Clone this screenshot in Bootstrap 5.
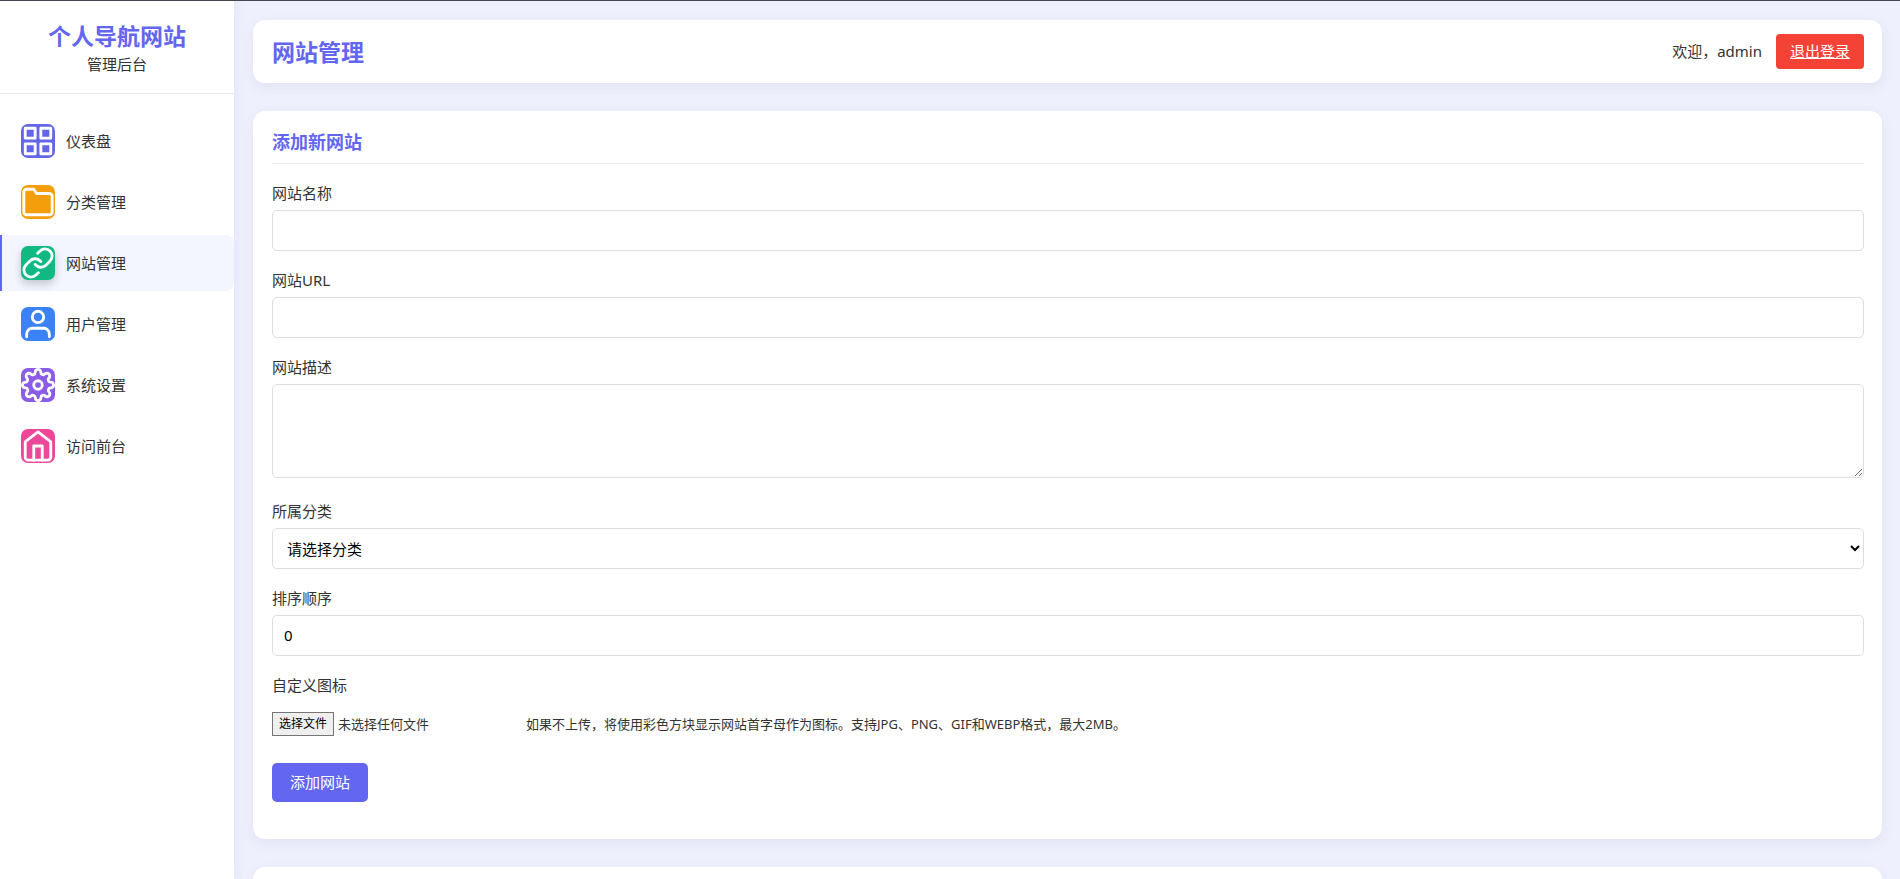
<!DOCTYPE html>
<html lang="zh-CN">
<head>
<meta charset="utf-8">
<meta name="viewport" content="width=device-width, initial-scale=1">
<title>网站管理</title>
<link href="https://cdn.jsdelivr.net/npm/bootstrap@5.3.0/dist/css/bootstrap.min.css" rel="stylesheet">
<style>
  :root { --brand: #6366f1; --ink: #333; --line: #ddd; }
  body {
    font: 15px/23px "Noto Sans", "Noto Sans CJK SC", sans-serif;
    color: var(--ink);
    background: #eef0fd;
    border-top: 1px solid #45454f;
  }
  a { color: inherit; }
  .side { width: 234px; background: #fff; box-shadow: 2px 0 10px rgba(99, 102, 241, .08); }
  .side-head { padding: 18px 19px 17px; border-bottom: 1px solid #eaeaea; }
  .brand-title { font-size: 23px; line-height: 34px; font-weight: 700; color: var(--brand); margin: 0; }
  .side-menu { padding-top: 19px; gap: 5px; }
  .side-link {
    display: flex; align-items: center; gap: 11px; height: 56px;
    padding-left: 19px; border-left: 2px solid transparent;
    border-radius: 0 8px 8px 0; text-decoration: none;
  }
  .side-link.active { background: #f3f6fe; border-left-color: var(--brand); }
  .tile { width: 34px; height: 34px; border-radius: 7px; flex: none; }
  .side-link.active .tile { box-shadow: 0 4px 8px rgba(0, 0, 0, .2); }
  .tile svg { display: block; width: 34px; height: 34px; fill: none; stroke: #fff; stroke-width: 2; stroke-linecap: round; stroke-linejoin: round; }
  .t-indigo { background: #6366e6; }
  .t-amber { background: #f59e0b; }
  .t-green { background: #10b981; }
  .t-blue { background: #3b82f6; }
  .t-violet { background: #8b5ce6; }
  .t-pink { background: #ec4899; }
  .content { padding: 19px 18px 0 19px; gap: 28px; }
  .panel { background: #fff; border-radius: 12px; box-shadow: 0 4px 14px rgba(60, 50, 120, .07); }
  .topbar { padding: 14px 18px 14px 19px; }
  .account { gap: 14px; }
  .logout { background: #f44336; border-radius: 4px; padding: 6px 14px; color: #fff; }
  .logout:hover { background: #dc3328; color: #fff; }
  .form-panel { padding: 18px 18px 19px 19px; }
  .panel-title { font-size: 18px; line-height: 27px; font-weight: 700; color: var(--brand); padding-bottom: 7px; border-bottom: 1px solid #eaeaea; margin: 0 0 18px; }
  .field { margin-bottom: 18px; }
  .field label.caption { display: block; margin-bottom: 5px; }
  .field .form-control { font-size: 15px; line-height: 19px; padding: 10px 11px; border-color: var(--line); border-radius: 5px; color: #000; }
  .field select.form-control { appearance: auto; height: 41px; padding: 8px 10px; line-height: 23px; }
  .field textarea.form-control { height: 94px; margin-bottom: 22px; }
  .upload-row { height: 43px; font-size: 13px; line-height: 18px; }
  .picker { width: 254px; }
  .picker input { cursor: pointer; }
  .picker-btn { background: #efefef; border: 1px solid #767676; color: #000; font-size: 12px; padding: 2px 6px; }
  .submit { background: var(--brand); color: #fff; font-size: 15px; line-height: 23px; padding: 8px 18px; border: 0; border-radius: 5px; margin-bottom: 18px; }
  .submit:hover { background: #4f46e5; color: #fff; }
  .next-panel { border-radius: 12px 12px 0 0; }
</style>
</head>
<body class="d-flex min-vh-100">
<aside class="side flex-shrink-0">
  <div class="side-head text-center">
    <h2 class="brand-title">个人导航网站</h2>
    <div>管理后台</div>
  </div>
  <nav class="side-menu d-flex flex-column">
    <a class="side-link" href="#"><span class="tile t-indigo"><svg viewBox="0 0 24 24"><rect x="3" y="3" width="7" height="7"/><rect x="14" y="3" width="7" height="7"/><rect x="14" y="14" width="7" height="7"/><rect x="3" y="14" width="7" height="7"/></svg></span>仪表盘</a>
    <a class="side-link" href="#"><span class="tile t-amber"><svg viewBox="0 0 24 24"><path d="M22 19a2 2 0 0 1-2 2H4a2 2 0 0 1-2-2V5a2 2 0 0 1 2-2h5l2 3h9a2 2 0 0 1 2 2z"/></svg></span>分类管理</a>
    <a class="side-link active" href="#" aria-current="page"><span class="tile t-green"><svg viewBox="0 0 24 24"><path d="M10 13a5 5 0 0 0 7.540.54l3-3a5 5 0 0 0-7.07-7.07l-1.72 1.71"/><path d="M14 11a5 5 0 0 0-7.540-.54l-3 3a5 5 0 0 0 7.07 7.07l1.71-1.71"/></svg></span>网站管理</a>
    <a class="side-link" href="#"><span class="tile t-blue"><svg viewBox="0 0 24 24"><path d="M20 21v-2a4 4 0 0 0-4-4H8a4 4 0 0 0-4 4v2"/><circle cx="12" cy="7" r="4"/></svg></span>用户管理</a>
    <a class="side-link" href="#"><span class="tile t-violet"><svg viewBox="0 0 24 24"><circle cx="12" cy="12" r="3"/><path d="M19.400 15a1.650 1.650 0 0 0 .33 1.820l.06.06a2 2 0 0 1 0 2.830 2 2 0 0 1-2.830 0l-.06-.06a1.650 1.650 0 0 0-1.820-.33 1.650 1.650 0 0 0-1 1.510V21a2 2 0 0 1-2 2 2 2 0 0 1-2-2v-.09A1.650 1.650 0 0 0 9 19.400a1.650 1.650 0 0 0-1.820.33l-.06.06a2 2 0 0 1-2.830 0 2 2 0 0 1 0-2.830l.06-.06a1.650 1.650 0 0 0 .33-1.820 1.650 1.650 0 0 0-1.510-1H3a2 2 0 0 1-2-2 2 2 0 0 1 2-2h.09A1.650 1.650 0 0 0 4.600 9a1.650 1.650 0 0 0-.33-1.820l-.06-.06a2 2 0 0 1 0-2.830 2 2 0 0 1 2.830 0l.06.06a1.650 1.650 0 0 0 1.820.33H9a1.650 1.650 0 0 0 1-1.510V3a2 2 0 0 1 2-2 2 2 0 0 1 2 2v.09a1.650 1.650 0 0 0 1 1.510 1.650 1.650 0 0 0 1.820-.33l.06-.06a2 2 0 0 1 2.830 0 2 2 0 0 1 0 2.830l-.06.06a1.650 1.650 0 0 0-.33 1.820V9a1.650 1.650 0 0 0 1.510 1H21a2 2 0 0 1 2 2 2 2 0 0 1-2 2h-.09a1.650 1.650 0 0 0-1.510 1z"/></svg></span>系统设置</a>
    <a class="side-link" href="#"><span class="tile t-pink"><svg viewBox="0 0 24 24"><path d="M3 9l9-7 9 7v11a2 2 0 0 1-2 2H5a2 2 0 0 1-2-2z"/><path d="M9 22V12h6v10"/></svg></span>访问前台</a>
  </nav>
</aside>
<main class="content d-flex flex-column flex-grow-1">
  <header class="panel topbar d-flex justify-content-between align-items-center">
    <h1 class="brand-title">网站管理</h1>
    <div class="account d-flex align-items-center">
      <span>欢迎，admin</span>
      <a class="logout" href="#">退出登录</a>
    </div>
  </header>
  <section class="panel form-panel">
    <h2 class="panel-title">添加新网站</h2>
    <form>
      <div class="field"><label class="caption" for="name">网站名称</label><input class="form-control" type="text" id="name"></div>
      <div class="field"><label class="caption" for="url">网站URL</label><input class="form-control" type="url" id="url"></div>
      <div class="field"><label class="caption" for="desc">网站描述</label><textarea class="form-control" id="desc"></textarea></div>
      <div class="field"><label class="caption" for="cat">所属分类</label><select class="form-control" id="cat"><option>请选择分类</option></select></div>
      <div class="field"><label class="caption" for="sort">排序顺序</label><input class="form-control" type="number" id="sort" value="0"></div>
      <div class="field">
        <label class="caption" for="icon">自定义图标</label>
        <div class="upload-row d-flex align-items-center">
          <div class="picker position-relative d-flex align-items-center gap-1">
            <span class="picker-btn">选择文件</span><span>未选择任何文件</span>
            <input class="position-absolute top-0 start-0 w-100 h-100 opacity-0" type="file" id="icon" accept=".jpg,.png,.gif,.webp">
          </div>
          <span>如果不上传，将使用彩色方块显示网站首字母作为图标。支持JPG、PNG、GIF和WEBP格式，最大2MB。</span>
        </div>
      </div>
      <button class="btn submit d-block" type="submit">添加网站</button>
    </form>
  </section>
  <section class="panel next-panel flex-grow-1"></section>
</main>
<script src="https://cdn.jsdelivr.net/npm/bootstrap@5.3.0/dist/js/bootstrap.bundle.min.js"></script>
</body>
</html>
